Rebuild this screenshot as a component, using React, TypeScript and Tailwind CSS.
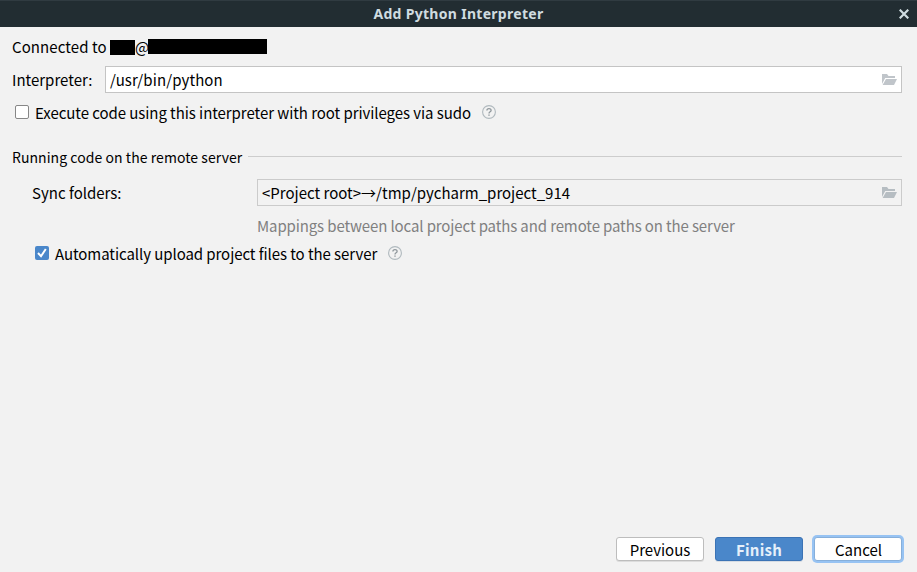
function FolderIcon({ className }: { className: string }) {
  return (
    <svg width="15" height="12" viewBox="0 0 15 12" className={className} fill="currentColor">
      <path d="M0 0H5L6.5 2H13V4H3.2L0 10Z" />
      <path d="M4 5H15L12 11H0.6Z" />
    </svg>
  );
}

function HelpIcon() {
  return (
    <svg className="mb-px shrink-0" width="14" height="14" viewBox="0 0 14 14" fill="none" stroke="#8f979c">
      <circle cx="7" cy="7" r="6.4" stroke="#b0b9be" strokeWidth="1.1" />
      <path d="M4.9 5.6C4.9 3 9.1 3 9.1 5.4C9.1 6.8 7 6.7 7 8.4" strokeWidth="1.3" />
      <path d="M7 9.4V10.8" strokeWidth="1.4" />
    </svg>
  );
}

function Checkbox({ checked = false }: { checked?: boolean }) {
  return checked ? (
    <span className="mb-px flex h-3.5 w-3.5 shrink-0 items-center justify-center rounded-[2px] bg-[#4a87ca]">
      <svg width="14" height="14" viewBox="0 0 14 14" fill="none" stroke="#fff" strokeWidth="2">
        <path d="M3 7L6 10.2L10.8 3" />
      </svg>
    </span>
  ) : (
    <span className="mb-px h-3.5 w-3.5 shrink-0 rounded-[2px] border border-[#878787] bg-white" />
  );
}

export default function App() {
  return (
    <div className="flex h-[572px] w-[917px] flex-col overflow-hidden bg-[#f2f2f2] font-['Noto_Sans_CJK_SC',sans-serif] text-[15px] leading-[27px] whitespace-nowrap text-black">
      <header className="grid h-[27px] shrink-0 grid-cols-[1fr_auto_1fr] items-center border-t border-[#303b41] bg-[#222d32] text-[#d0dce0]">
        <span />
        <h1 className="font-['Noto_Sans',sans-serif] text-[14px] leading-[26px] font-bold tracking-[0.3px]">Add Python Interpreter</h1>
        <svg className="mr-2 justify-self-end" width="10" height="10" viewBox="0 0 10 10" stroke="currentColor" strokeWidth="2.2">
          <path d="M0.7 0.7L9.3 9.3M9.3 0.7L0.7 9.3" />
        </svg>
      </header>

      <main className="flex grow flex-col pr-[15px] pl-3">
        <div className="mt-[6px] flex h-[27px] items-center">
          <span className="w-[98px] tracking-[0.08px]">Connected to</span>
          <span className="mt-[2px] h-[15px] w-[25px] bg-black" />
          <span className="w-[13px]">@</span>
          <span className="h-[15px] w-[119px] bg-black" />
        </div>

        <div className="mt-[6px] flex h-[27px]">
          <label className="w-[93px]">Interpreter:</label>
          <div className="flex grow items-center justify-between border border-[#c4c4c4] bg-white pr-1 pl-1">
            <span className="tracking-[0.1px]">/usr/bin/python</span>
            <FolderIcon className="block text-[#c0c5ca]" />
          </div>
        </div>

        <div className="mt-[6px] flex h-[27px] items-center pl-[3px]">
          <Checkbox />
          <span className="ml-1.5 w-[447px] tracking-[-0.06px]">Execute code using this interpreter with root privileges via sudo</span>
          <HelpIcon />
        </div>

        <div className="mt-[17px] flex h-[27px] items-center text-[14px]">
          <span className="w-[236px] pt-[2px] tracking-[0.06px]">Running code on the remote server</span>
          <span className="mb-px h-px grow bg-[#cdcdcd]" />
        </div>

        <div className="mt-[9px] flex h-[27px] pl-5">
          <label className="w-[225px]">Sync folders:</label>
          <div className="flex grow items-center justify-between border border-[#cbcbcb] pr-1 pl-1">
            <span>&lt;Project root&gt;→/tmp/pycharm_project_914</span>
            <FolderIcon className="block text-[#b6bdc2]" />
          </div>
        </div>

        <p className="mt-[6px] h-[27px] pl-[245px] tracking-[-0.12px] text-[#808080]">Mappings between local project paths and remote paths on the server</p>

        <div className="mt-px flex h-[27px] items-center pl-[23px]">
          <Checkbox checked />
          <span className="ml-1.5 w-[333px] tracking-[-0.07px]">Automatically upload project files to the server</span>
          <HelpIcon />
        </div>
      </main>

      <footer className="mr-[15px] mb-[11px] flex h-6 shrink-0 justify-end gap-[11px] leading-[22px]">
        <button className="w-[88px] rounded-[3px] border border-[#bdbdbd] bg-white pt-px leading-[21px] shadow-[0_1px_0_#dcdcdc]">Previous</button>
        <button className="w-[88px] rounded-[3px] border border-[#3b73b5] bg-[#4a87ca] pt-px leading-[21px] font-bold tracking-[0.25px] text-[#e6f0fa] shadow-[0_1px_0_#d6dce3]">Finish</button>
        <button className="w-[88px] rounded-[3px] border border-[#87afda] bg-white pt-px pl-px leading-[21px] ring-2 ring-[#97c3f3]">Cancel</button>
      </footer>
    </div>
  );
}
